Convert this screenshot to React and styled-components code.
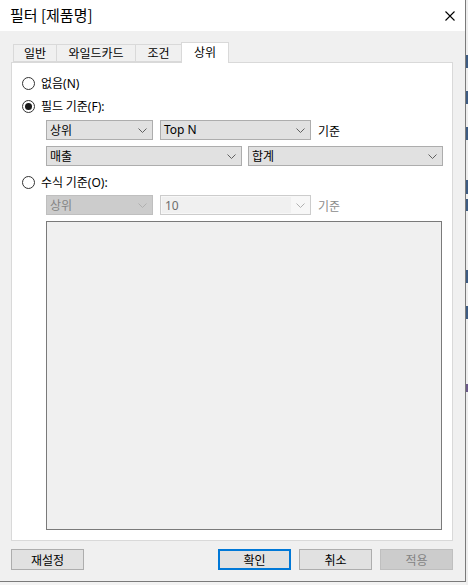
import React from "react";
import styled, { createGlobalStyle } from "styled-components";

const GlobalStyle = createGlobalStyle`
  html, body {
    margin: 0;
    padding: 0;
    background: #f3f3f3;
  }
  body {
    font-family: "Noto Sans CJK KR", "Noto Sans", sans-serif;
    font-size: 12px;
    color: #000;
  }
`;

const Page = styled.div`
  display: flex;
  width: 468px;
  height: 585px;
  overflow: hidden;
`;

const Window = styled.div`
  width: 466px;
  height: 582px;
  box-sizing: border-box;
  border-right: 1px solid #7a7a7a;
  border-bottom: 1px solid #7a7a7a;
  background: #f0f0f0;
  display: flex;
  flex-direction: column;
  flex-shrink: 0;
`;

const Desktop = styled.div`
  flex: 1;
  background: linear-gradient(
    to bottom,
    #eeeeee 0 55px,
    #3d5b82 55px 68px,
    #eeeeee 68px 91px,
    #3d5b82 91px 104px,
    #eeeeee 104px 127px,
    #3d5b82 127px 140px,
    #eeeeee 140px 180px,
    #3d5b82 180px 194px,
    #eeeeee 194px 199px,
    #3d5b82 199px 211px,
    #eeeeee 211px 270px,
    #3d5b82 270px 283px,
    #eeeeee 283px 306px,
    #3d5b82 306px 319px,
    #eeeeee 319px 384px,
    #6b5a8a 384px 392px,
    #eeeeee 392px
  );
`;

const TitleBar = styled.div`
  height: 31px;
  background: #fff;
  display: flex;
  align-items: center;
  justify-content: space-between;
  padding: 0 10px 0 10px;
  box-sizing: border-box;
`;

const Title = styled.div`
  font-size: 15px;
  line-height: 18px;
  margin-top: -1px;
`;

const Body = styled.div`
  flex: 1;
  display: flex;
  flex-direction: column;
  padding: 11px 12px 0 11px;
`;

const TabRow = styled.div`
  display: flex;
  align-items: flex-end;
  height: 20px;
  padding-left: 2px;
  position: relative;
  z-index: 1;
`;

const Tab = styled.div`
  box-sizing: border-box;
  width: ${(p) => p.$w}px;
  height: ${(p) => (p.$active ? 21 : 18)}px;
  margin-bottom: ${(p) => (p.$active ? -1 : 0)}px;
  margin-left: -1px;
  border: 1px solid #d9d9d9;
  border-bottom: ${(p) => (p.$active ? "none" : "1px solid #d9d9d9")};
  background: ${(p) => (p.$active ? "#fff" : "#f0f0f0")};
  display: flex;
  justify-content: center;
  align-items: center;
  padding-bottom: ${(p) => (p.$active ? 2 : 0)}px;
  font-size: 12px;
  line-height: 14px;
  &:first-child {
    margin-left: 0;
  }
`;

const Panel = styled.div`
  height: 479px;
  box-sizing: border-box;
  border: 1px solid #d9d9d9;
  background: #fff;
  display: flex;
  flex-direction: column;
  padding: 10px 0 0 10px;
`;

const RadioRow = styled.div`
  display: flex;
  align-items: center;
  height: 20px;
  gap: 6px;
  margin-top: ${(p) => p.$mt || 0}px;
`;

const RadioCircle = styled.div`
  width: 13px;
  height: 13px;
  box-sizing: border-box;
  border: 1px solid #333;
  border-radius: 50%;
  display: flex;
  align-items: center;
  justify-content: center;
  &::after {
    content: "";
    display: ${(p) => (p.$checked ? "block" : "none")};
    width: 7px;
    height: 7px;
    border-radius: 50%;
    background: #1a1a1a;
  }
`;

const Label = styled.span`
  font-size: 12px;
  line-height: 14px;
  color: ${(p) => (p.$disabled ? "#8c8c8c" : "#000")};
`;

const Mnemonic = styled.span`
  font-family: "Noto Sans", "Noto Sans CJK KR", sans-serif;
`;

const FieldRow = styled.div`
  display: flex;
  align-items: center;
  gap: ${(p) => p.$gap || 7}px;
  margin-top: ${(p) => p.$mt || 0}px;
  padding-left: 24px;
`;

const Select = styled.div`
  box-sizing: border-box;
  width: ${(p) => p.$w}px;
  height: 20px;
  border: 1px solid ${(p) => (p.$disabled ? "#bfbfbf" : "#adadad")};
  background: ${(p) => (p.$disabled ? "#cccccc" : "#e1e1e1")};
  color: ${(p) => (p.$disabled ? "#838383" : "#000")};
  display: flex;
  align-items: center;
  justify-content: space-between;
  padding: 0 5px 0 3px;
  font-size: 12px;
  line-height: 14px;
`;

const ComboField = styled.div`
  box-sizing: border-box;
  width: ${(p) => p.$w}px;
  height: 20px;
  border: 1px solid #cccccc;
  background: #f7f7f7;
  display: flex;
  align-items: stretch;
`;

const ComboText = styled.div`
  flex: 1;
  background: #f0f0f0;
  margin: 1px 0 1px 1px;
  padding-left: 3px;
  display: flex;
  align-items: center;
  color: #6d6d6d;
  font-family: "Noto Sans", sans-serif;
  font-size: 12px;
`;

const ComboButton = styled.div`
  width: 19px;
  display: flex;
  align-items: center;
  justify-content: center;
`;

const Latin = styled.span`
  font-family: "Noto Sans", sans-serif;
  font-size: 12px;
`;

const Suffix = styled.span`
  font-size: 12px;
  color: ${(p) => (p.$disabled ? "#8c8c8c" : "#000")};
`;

const ExprBox = styled.div`
  box-sizing: border-box;
  width: 396px;
  height: 309px;
  margin: 6px 0 0 24px;
  border: 1px solid #7a7a7a;
  background: #f0f0f0;
`;

const ButtonRow = styled.div`
  display: flex;
  align-items: center;
  margin-top: 8px;
  gap: 8px;
`;

const Spacer = styled.div`
  flex: 1;
`;

const Button = styled.div`
  box-sizing: border-box;
  width: 73px;
  height: 21px;
  border: ${(p) =>
    p.$default
      ? "2px solid #0078d7"
      : p.$disabled
      ? "1px solid #bfbfbf"
      : "1px solid #adadad"};
  background: ${(p) => (p.$disabled ? "#cccccc" : "#e1e1e1")};
  color: ${(p) => (p.$disabled ? "#838383" : "#000")};
  display: flex;
  align-items: center;
  justify-content: center;
  font-size: 12px;
  line-height: 14px;
`;

const Chevron = ({ disabled }) => (
  <svg width="9" height="5" viewBox="0 0 9 5">
    <polyline
      points="0.5,0.5 4.5,4.5 8.5,0.5"
      fill="none"
      stroke={disabled ? "#b0b0b0" : "#606060"}
      strokeWidth="1"
    />
  </svg>
);

const CloseIcon = () => (
  <svg width="10" height="10" viewBox="0 0 10 10">
    <path d="M0.5 0.5 L9.5 9.5 M9.5 0.5 L0.5 9.5" stroke="#000" strokeWidth="1.1" />
  </svg>
);

const tabs = [
  { label: "일반", w: 44 },
  { label: "와일드카드", w: 80 },
  { label: "조건", w: 47 },
  { label: "상위", w: 48, active: true },
];

export default function App() {
  return (
    <Page>
      <GlobalStyle />
      <Window>
        <TitleBar>
          <Title>필터 [제품명]</Title>
          <CloseIcon />
        </TitleBar>
        <Body>
          <TabRow>
            {tabs.map((t) => (
              <Tab key={t.label} $w={t.w} $active={t.active}>
                {t.label}
              </Tab>
            ))}
          </TabRow>
          <Panel>
            <RadioRow>
              <RadioCircle />
              <Label>
                없음<Mnemonic>(N)</Mnemonic>
              </Label>
            </RadioRow>
            <RadioRow $mt={3}>
              <RadioCircle $checked />
              <Label>
                필드 기준<Mnemonic>(F):</Mnemonic>
              </Label>
            </RadioRow>
            <FieldRow $mt={4}>
              <Select $w={107}>
                <span>상위</span>
                <Chevron />
              </Select>
              <Select $w={151}>
                <Latin>Top N</Latin>
                <Chevron />
              </Select>
              <Suffix>기준</Suffix>
            </FieldRow>
            <FieldRow $mt={6} $gap={6}>
              <Select $w={196}>
                <span>매출</span>
                <Chevron />
              </Select>
              <Select $w={195}>
                <span>합계</span>
                <Chevron />
              </Select>
            </FieldRow>
            <RadioRow $mt={6}>
              <RadioCircle />
              <Label>
                수식 기준<Mnemonic>(O):</Mnemonic>
              </Label>
            </RadioRow>
            <FieldRow $mt={3}>
              <Select $w={107} $disabled>
                <span>상위</span>
                <Chevron disabled />
              </Select>
              <ComboField $w={151}>
                <ComboText>10</ComboText>
                <ComboButton>
                  <Chevron disabled />
                </ComboButton>
              </ComboField>
              <Suffix $disabled>기준</Suffix>
            </FieldRow>
            <ExprBox />
          </Panel>
          <ButtonRow>
            <Button>재설정</Button>
            <Spacer />
            <Button $default>확인</Button>
            <Button>취소</Button>
            <Button $disabled>적용</Button>
          </ButtonRow>
        </Body>
      </Window>
      <Desktop />
    </Page>
  );
}
